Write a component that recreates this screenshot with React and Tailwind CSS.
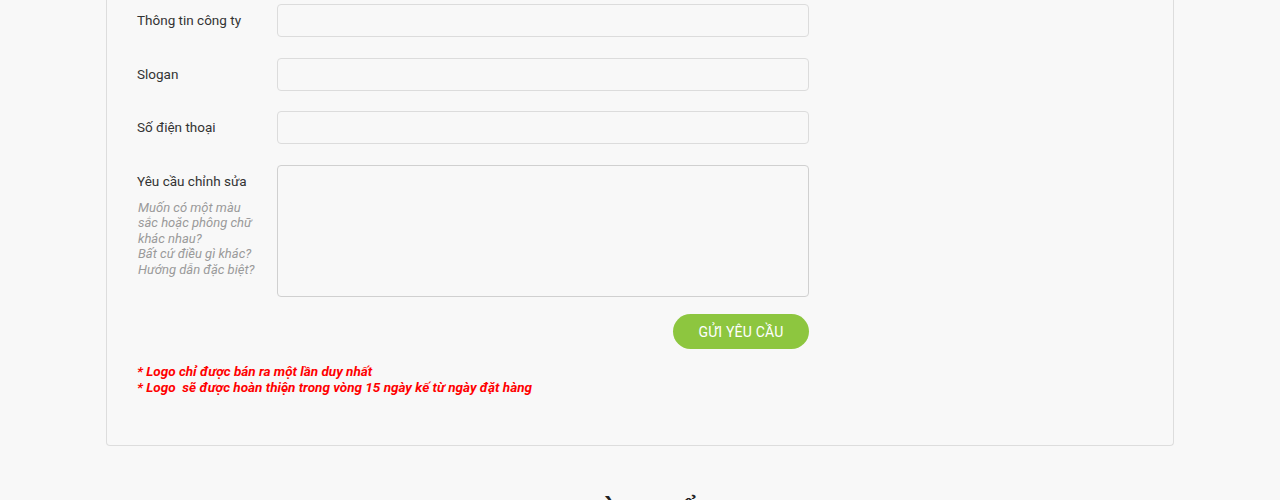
import React from 'react';

const rows = [
    { label: 'Thông tin công ty' },
    { label: 'Slogan' },
    { label: 'Số điện thoại' },
];

const App = () => {
    return (
        <div className="min-h-[500px] bg-[#f8f8f8] font-['Roboto',sans-serif] overflow-hidden">
            <div className="mx-[106px] w-[1068px] border-x border-b border-[#dddddd] rounded-b-[4px] pt-[4px] pb-[50px] pl-[30px]">
                <div className="w-[672px] flex flex-col gap-[20.5px]">
                    {rows.map(({ label }) => (
                        <div key={label} className="flex items-center">
                            <label className="w-[140px] shrink-0 text-[13.5px] text-[#333333]">{label}</label>
                            <input className="flex-1 h-[33px] border border-[#dcdcdc] rounded-[4px] bg-[#f8f8f8] outline-none" />
                        </div>
                    ))}
                    <div className="flex items-start">
                        <div className="w-[140px] shrink-0 pt-[6px]">
                            <p className="text-[13.5px] text-[#333333]">Yêu cầu chỉnh sửa</p>
                            <p className="mt-[9px] pl-[1px] text-[13px] leading-[15.5px] italic text-[#9a9a9a] w-[125px]">
                                Muốn có một màu sắc hoặc phông chữ khác nhau?<br />
                                Bất cứ điều gì khác?<br />
                                Hướng dẫn đặc biệt?
                            </p>
                        </div>
                        <textarea className="flex-1 h-[132px] border border-[#d0d0d0] rounded-[4px] bg-[#f8f8f8] outline-none resize-none" />
                    </div>
                </div>
                <div className="w-[672px] flex justify-end mt-[17px]">
                    <button className="w-[136px] h-[35px] pt-[3px] rounded-full bg-[#8dc63f] text-white text-[14px] tracking-[0.2px] uppercase">
                        Gửi yêu cầu
                    </button>
                </div>
                <div className="mt-[14px] text-[13.5px] leading-[16px] italic font-bold text-[#ff0000]">
                    <p>* Logo chỉ được bán ra một lần duy nhất</p>
                    <p>* Logo&nbsp; sẽ được hoàn thiện trong vòng 15 ngày kế từ ngày đặt hàng</p>
                </div>
            </div>
            <h2 className="mt-[46px] text-center text-[26px] font-bold text-[#222222] pl-[10px]">QUY TRÌNH KIỂM TRA</h2>
        </div>
    );
};

export default App;
